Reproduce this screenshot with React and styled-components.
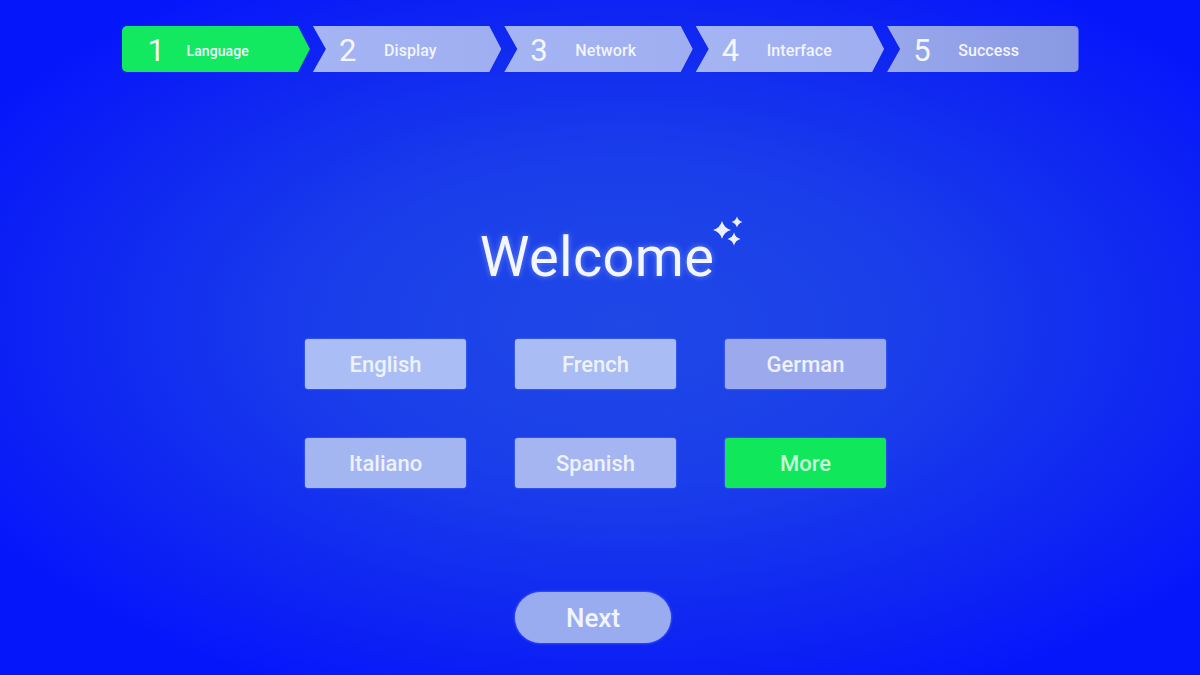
import React from "react";
import styled, { createGlobalStyle } from "styled-components";

const Global = createGlobalStyle`
  html, body { margin: 0; padding: 0; }
  body {
    width: 1200px; height: 675px; overflow: hidden;
    font-family: Roboto, "Noto Sans", "Liberation Sans", sans-serif;
  }
`;

const Screen = styled.div`
  width: 1200px;
  height: 675px;
  box-sizing: border-box;
  padding-top: 26px;
  display: flex;
  flex-direction: column;
  align-items: center;
  background: radial-gradient(ellipse 62% 60% at 52% 48%, #1f48e6 0%, #1a3eea 40%, #0f26f2 75%, #0616fb 100%);
  color: #fff;
`;

const Stepper = styled.div`
  display: flex;
  gap: 3px;
  width: 957px;
`;

const Step = styled.div`
  position: relative;
  width: ${(p) => (p.$last ? 192 : 189)}px;
  height: 46px;
  box-sizing: border-box;
  display: flex;
  align-items: center;
  padding-left: 26px;
  padding-top: 3px;
  background: ${(p) =>
    p.$active ? "#12e860" : p.$last ? "linear-gradient(90deg,#99a8ec,#8898e2)" : "linear-gradient(90deg,#a5b4f3,#9eaef0)"};
  border-radius: ${(p) => (p.$first ? "5px 0 0 5px" : p.$last ? "0 5px 5px 0" : "0")};
  clip-path: ${(p) =>
    p.$first
      ? "polygon(0 0, calc(100% - 12px) 0, 100% 50%, calc(100% - 12px) 100%, 0 100%)"
      : p.$last
      ? "polygon(0 0, 100% 0, 100% 100%, 0 100%, 13px 50%)"
      : "polygon(0 0, calc(100% - 12px) 0, 100% 50%, calc(100% - 12px) 100%, 0 100%, 13px 50%)"};
`;

const StepNum = styled.span`
  font-size: 31px;
  font-weight: 400;
  width: 18px;
  margin-right: ${(p) => (p.$first ? 21 : 27)}px;
  color: #f4f7ff;
  line-height: 1;
`;

const StepLabel = styled.span`
  font-size: ${(p) => (p.$first ? 14 : 16)}px;
  font-weight: 500;
  color: #f2f5ff;
  letter-spacing: 0.1px;
`;

const Title = styled.h1`
  position: relative;
  margin: 153px 0 0 -6px;
  font-size: 56px;
  line-height: 64px;
  font-weight: 400;
  color: #f3f6ff;
  text-shadow: 0 0 6px rgba(200, 215, 255, 0.45);
  letter-spacing: 0.3px;
`;

const Sparkle = styled.svg`
  position: absolute;
  right: -32px;
  top: -10px;
`;

const Grid = styled.div`
  margin: 50px 0 0 -9px;
  display: grid;
  grid-template-columns: repeat(3, 161px);
  grid-auto-rows: 50px;
  column-gap: 49px;
  row-gap: 49px;
`;

const LangButton = styled.div`
  display: flex;
  align-items: center;
  justify-content: center;
  border-radius: 3px;
  font-size: 22px;
  font-weight: 500;
  color: ${(p) => (p.$selected ? "#c9f7da" : "#eef2ff")};
  background: ${(p) => (p.$selected ? "#10e75b" : p.$shade)};
  box-shadow: 0 0 2px rgba(190, 205, 255, 0.5);
`;

const NextButton = styled.div`
  margin: 104px 0 0 -14px;
  width: 156px;
  height: 51px;
  border-radius: 26px;
  display: flex;
  align-items: center;
  justify-content: center;
  background: #9aacf0;
  font-size: 26px;
  font-weight: 500;
  color: #f2f5ff;
  box-shadow: 0 0 3px rgba(190, 205, 255, 0.5);
`;

const steps = ["Language", "Display", "Network", "Interface", "Success"];
const langs = [
  { name: "English", shade: "#aabef5" },
  { name: "French", shade: "#a9bcf4" },
  { name: "German", shade: "#9caaed" },
  { name: "Italiano", shade: "#a4b6f2" },
  { name: "Spanish", shade: "#a4b5f1" },
  { name: "More", selected: true },
];

const star = (cx, cy, r) => {
  const k = r * 0.22;
  return `M${cx} ${cy - r} Q${cx + k} ${cy - k} ${cx + r} ${cy} Q${cx + k} ${cy + k} ${cx} ${cy + r} Q${cx - k} ${cy + k} ${cx - r} ${cy} Q${cx - k} ${cy - k} ${cx} ${cy - r}Z`;
};

export default function App() {
  return (
    <>
      <Global />
      <Screen>
        <Stepper>
          {steps.map((s, i) => (
            <Step key={s} $first={i === 0} $last={i === steps.length - 1} $active={i === 0}>
              <StepNum $first={i === 0}>{i + 1}</StepNum>
              <StepLabel $first={i === 0}>{s}</StepLabel>
            </Step>
          ))}
        </Stepper>
        <Title>
          Welcome
          <Sparkle width="34" height="34" viewBox="0 0 34 34">
            <path d={star(10, 15, 9)} fill="#eaf0ff" />
            <path d={star(25, 7, 5.5)} fill="#eaf0ff" />
            <path d={star(22, 24, 6.5)} fill="#eaf0ff" />
          </Sparkle>
        </Title>
        <Grid>
          {langs.map((l) => (
            <LangButton key={l.name} $selected={l.selected} $shade={l.shade}>
              {l.name}
            </LangButton>
          ))}
        </Grid>
        <NextButton>Next</NextButton>
      </Screen>
    </>
  );
}
